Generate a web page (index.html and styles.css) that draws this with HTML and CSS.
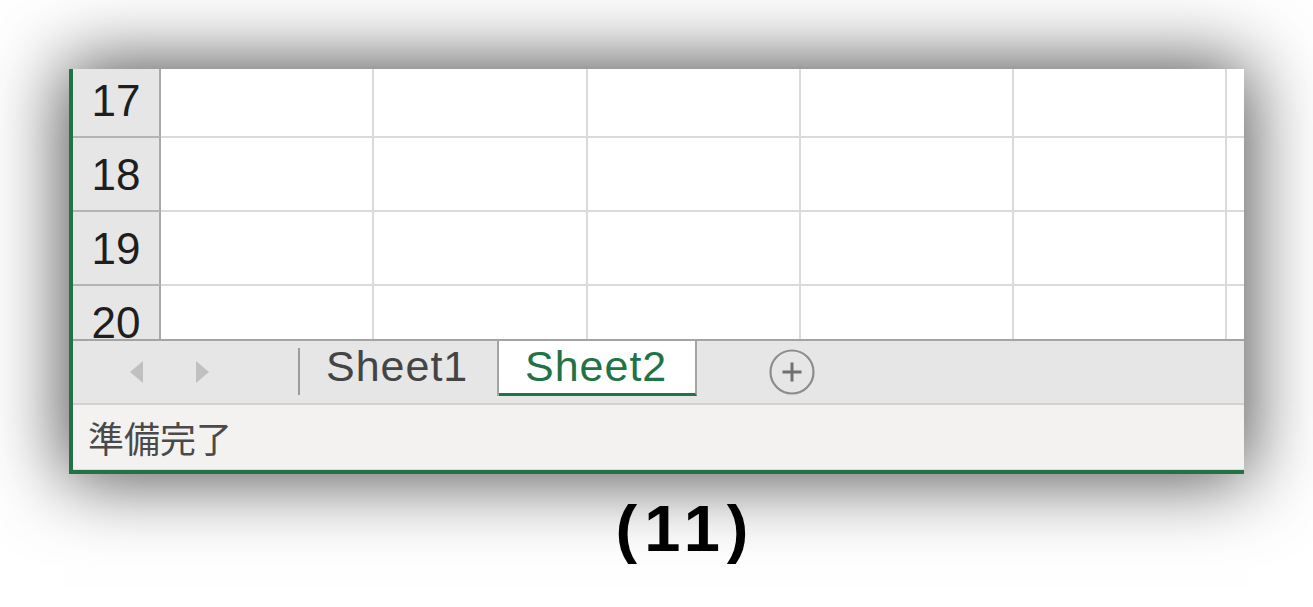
FILE: index.html
```html
<!DOCTYPE html>
<html lang="ja">
<head>
<meta charset="utf-8">
<title>Excel sheet tabs</title>
<link rel="stylesheet" href="styles.css">
</head>
<body>
<div class="page">
  <div class="window">
    <div class="grid">
      <div class="rows">
        <div class="row"><div class="rh">17</div><div class="cell"></div><div class="cell"></div><div class="cell"></div><div class="cell"></div><div class="cell"></div><div class="cell"></div></div>
        <div class="row"><div class="rh">18</div><div class="cell"></div><div class="cell"></div><div class="cell"></div><div class="cell"></div><div class="cell"></div><div class="cell"></div></div>
        <div class="row"><div class="rh">19</div><div class="cell"></div><div class="cell"></div><div class="cell"></div><div class="cell"></div><div class="cell"></div><div class="cell"></div></div>
        <div class="row"><div class="rh">20</div><div class="cell"></div><div class="cell"></div><div class="cell"></div><div class="cell"></div><div class="cell"></div><div class="cell"></div></div>
      </div>
    </div>
    <div class="tabbar">
      <div class="nav">
        <span class="arrow arrow-left"></span>
        <span class="arrow arrow-right"></span>
      </div>
      <div class="sep"></div>
      <div class="tab">Sheet1</div>
      <div class="tab tab-active">Sheet2</div>
      <div class="add">
        <svg width="48" height="48" viewBox="0 0 48 48">
          <circle cx="24" cy="24" r="21.5" fill="none" stroke="#8c8c8c" stroke-width="2.2"/>
          <path d="M24 14.5 V33.5 M14.5 24 H33.5" stroke="#707070" stroke-width="3" fill="none"/>
        </svg>
      </div>
    </div>
    <div class="status">準備完了</div>
  </div>
  <div class="caption">(11)</div>
</div>
</body>
</html>
```
FILE: styles.css
```css
html, body {
  margin: 0;
  padding: 0;
  background: #ffffff;
}
.page {
  width: 1313px;
  height: 607px;
  overflow: hidden;
  padding: 69px 0 0 69px;
  box-sizing: border-box;
}
.window {
  width: 1175px;
  box-sizing: border-box;
  border-left: 4px solid #217346;
  border-bottom: 4px solid #217346;
  background: #ffffff;
  box-shadow: 0 0 72px 5px rgba(0, 0, 0, 0.7);
  display: flex;
  flex-direction: column;
}
.grid {
  height: 270px;
  overflow: hidden;
}
.rows {
  margin-top: -5px;
  display: flex;
  flex-direction: column;
}
.row {
  display: flex;
  height: 74px;
}
.rh {
  flex: 0 0 88px;
  box-sizing: border-box;
  background: #e6e6e6;
  border-right: 2px solid #a8a8a8;
  border-bottom: 2px solid #b4b4b4;
  display: flex;
  align-items: center;
  justify-content: center;
  font-family: "Liberation Sans", Arial, sans-serif;
  font-size: 44px;
  color: #1e1e1e;
  padding-top: 2px;
}
.cell {
  flex: 0 0 213.3px;
  box-sizing: border-box;
  border-right: 2px solid #dadada;
  border-bottom: 2px solid #dadada;
}
.tabbar {
  height: 62px;
  background: #e6e6e6;
  border-top: 2px solid #a4a4a4;
  border-bottom: 2px solid #d2d2d2;
  display: flex;
  align-items: flex-start;
}
.nav {
  width: 225px;
  height: 62px;
  display: flex;
  align-items: center;
}
.arrow {
  width: 0;
  height: 0;
  border-top: 11.5px solid transparent;
  border-bottom: 11.5px solid transparent;
}
.arrow-left {
  margin-left: 57px;
  border-right: 13px solid #c0c0c0;
}
.arrow-right {
  margin-left: 53px;
  border-left: 13px solid #c0c0c0;
}
.sep {
  width: 2px;
  height: 47px;
  margin-top: 7px;
  background: #9c9c9c;
}
.tab {
  width: 199px;
  height: 55px;
  box-sizing: border-box;
  border-right: 2px solid #a4a4a4;
  padding: 0 0 4px 26px;
  display: flex;
  align-items: center;
  font-family: "Liberation Sans", Arial, sans-serif;
  font-size: 43px;
  letter-spacing: 1px;
  color: #444444;
}
.tab-active {
  width: 198px;
  background: #ffffff;
  color: #217346;
  border-bottom: 3px solid #217346;
  padding-bottom: 1px;
}
.add {
  margin-left: 71px;
  height: 62px;
  display: flex;
  align-items: center;
}
.add svg {
  display: block;
}
.status {
  height: 65px;
  box-sizing: border-box;
  background: #f3f2f1;
  border-bottom: 1px solid #d6dcd8;
  padding-left: 15px;
  display: flex;
  align-items: center;
  font-family: "Noto Sans CJK JP", "Noto Sans", sans-serif;
  font-size: 36px;
  color: #4a4a4a;
}
.caption {
  margin: 23px 0 0 -69px;
  padding-left: 58px;
  width: 1313px;
  box-sizing: border-box;
  text-align: center;
  font-family: "Liberation Sans", Arial, sans-serif;
  font-weight: bold;
  font-size: 65px;
  line-height: 64px;
  letter-spacing: 7px;
  color: #000000;
}
```
